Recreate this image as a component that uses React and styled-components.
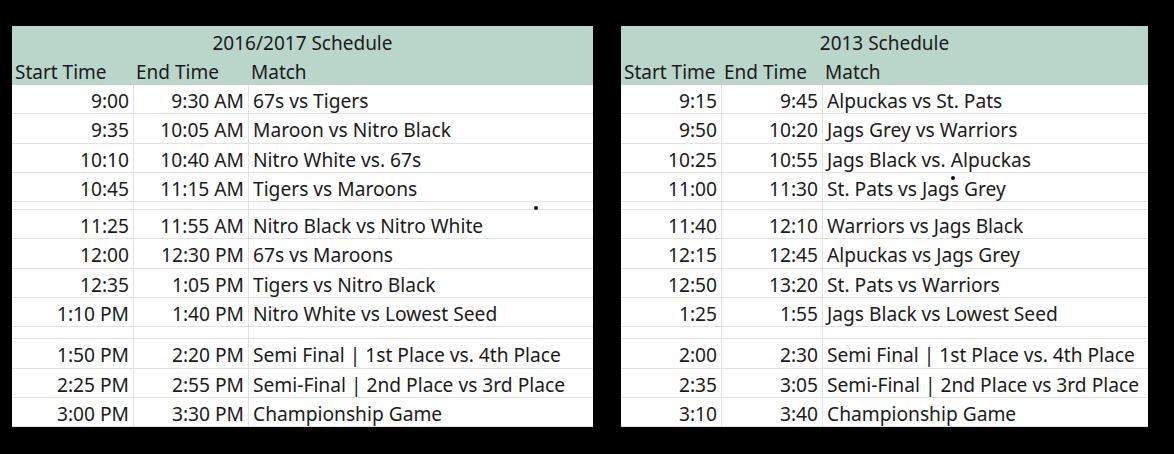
import React from 'react'
import styled, { createGlobalStyle } from 'styled-components'

const GlobalStyle = createGlobalStyle`
  html, body {
    margin: 0;
    padding: 0;
    background: #000;
  }
`

const left = {
  title: '2016/2017 Schedule',
  columns: '121px 115px 345px',
  dot: { x: 522, y: 180 },
  rows: [
    ['9:00', '9:30 AM', '67s vs Tigers'],
    ['9:35', '10:05 AM', 'Maroon vs Nitro Black'],
    ['10:10', '10:40 AM', 'Nitro White vs. 67s'],
    ['10:45', '11:15 AM', 'Tigers vs Maroons'],
    null,
    ['11:25', '11:55 AM', 'Nitro Black vs Nitro White'],
    ['12:00', '12:30 PM', '67s vs Maroons'],
    ['12:35', '1:05 PM', 'Tigers vs Nitro Black'],
    ['1:10 PM', '1:40 PM', 'Nitro White vs Lowest Seed'],
    null,
    ['1:50 PM', '2:20 PM', 'Semi Final | 1st Place vs. 4th Place'],
    ['2:25 PM', '2:55 PM', 'Semi-Final | 2nd Place vs 3rd Place'],
    ['3:00 PM', '3:30 PM', 'Championship Game']
  ]
}

const right = {
  title: '2013 Schedule',
  columns: '100px 101px 326px',
  dot: { x: 330, y: 150 },
  rows: [
    ['9:15', '9:45', 'Alpuckas vs St. Pats'],
    ['9:50', '10:20', 'Jags Grey vs Warriors'],
    ['10:25', '10:55', 'Jags Black vs. Alpuckas'],
    ['11:00', '11:30', 'St. Pats vs Jags Grey'],
    null,
    ['11:40', '12:10', 'Warriors vs Jags Black'],
    ['12:15', '12:45', 'Alpuckas vs Jags Grey'],
    ['12:50', '13:20', 'St. Pats vs Warriors'],
    ['1:25', '1:55', 'Jags Black vs Lowest Seed'],
    null,
    ['2:00', '2:30', 'Semi Final | 1st Place vs. 4th Place'],
    ['2:35', '3:05', 'Semi-Final | 2nd Place vs 3rd Place'],
    ['3:10', '3:40', 'Championship Game']
  ]
}

function App() {
  return (
    <>
      <GlobalStyle />
      <Page>
        <Schedule data={left} />
        <Schedule data={right} />
      </Page>
    </>
  )
}

function Schedule({ data }) {
  let spacer = 0
  return (
    <Sheet>
      <Header>
        <Title>{data.title}</Title>
        <Grid columns={data.columns}>
          <HeadCell>Start Time</HeadCell>
          <HeadCell>End Time</HeadCell>
          <HeadCell>Match</HeadCell>
        </Grid>
      </Header>
      {data.rows.map((row, i) => {
        if (!row) {
          spacer += 1
          const h = spacer === 1 ? 8 : 12
          return (
            <Grid key={i} columns={data.columns} lined>
              <Cell thin={h} />
              <Cell thin={h} />
              <Cell thin={h} />
            </Grid>
          )
        }
        return (
          <Grid key={i} columns={data.columns} lined>
            <Cell align="right">{row[0]}</Cell>
            <Cell align="right">{row[1]}</Cell>
            <Cell>{row[2]}</Cell>
          </Grid>
        )
      })}
      <Dot style={{ left: data.dot.x, top: data.dot.y }} />
    </Sheet>
  )
}

const Page = styled.div`
  width: 1174px;
  height: 454px;
  box-sizing: border-box;
  padding: 26px 0 0 12px;
  display: flex;
  align-items: flex-start;
  gap: 28px;
  background: #000;
  font-family: 'Noto Sans', 'Open Sans', sans-serif;
  color: #1a1a1a;
`

const Sheet = styled.div`
  position: relative;
  background: #fff;
`

const Header = styled.div`
  background: #bad5ca;
`

const Title = styled.div`
  height: 30px;
  line-height: 35px;
  text-align: center;
  font-size: 19px;
  white-space: nowrap;
`

const Grid = styled.div`
  display: grid;
  grid-template-columns: ${props => props.columns};
  border-bottom: ${props => (props.lined ? '1px solid #e2e2e2' : 'none')};
`

const HeadCell = styled.div`
  height: 29px;
  line-height: 33px;
  padding-left: 3px;
  font-size: 19px;
  white-space: nowrap;
`

const Cell = styled.div`
  height: ${props => (props.thin ? props.thin - 1 : 28.3)}px;
  line-height: 31px;
  padding: 0 4px 0 4px;
  font-size: 19.2px;
  white-space: nowrap;
  overflow: hidden;
  text-align: ${props => props.align || 'left'};
  & + & {
    border-left: 1px solid #e2e2e2;
  }
`

const Dot = styled.span`
  position: absolute;
  width: 4px;
  height: 4px;
  border-radius: 50%;
  background: #111;
`

export default App
